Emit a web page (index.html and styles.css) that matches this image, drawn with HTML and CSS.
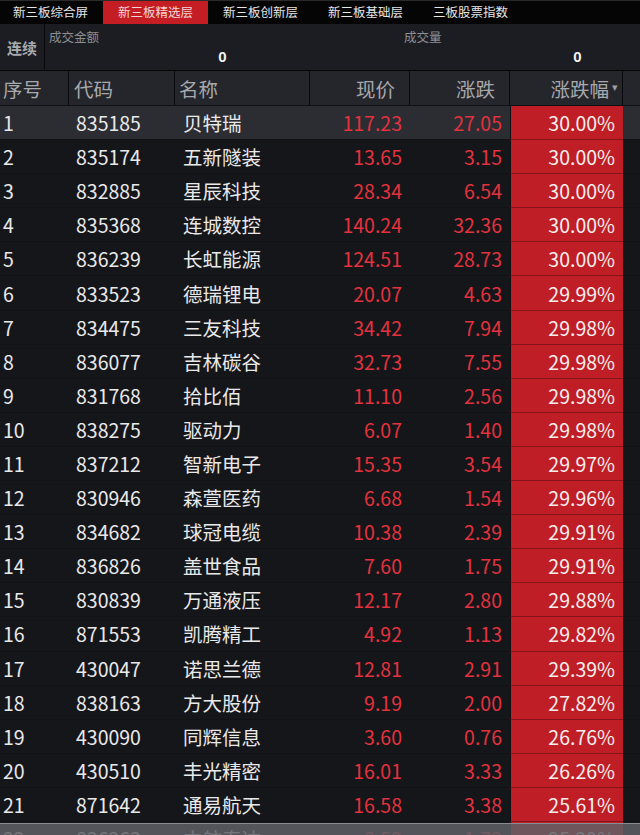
FILE: index.html
```html
<!DOCTYPE html>
<html lang="zh-CN">
<head>
<meta charset="utf-8">
<title>新三板精选层</title>
<link rel="stylesheet" href="styles.css">
</head>
<body>
<div class="screen">
  <nav class="tabs">
    <div class="tab">新三板综合屏</div>
    <div class="tab active">新三板精选层</div>
    <div class="tab">新三板创新层</div>
    <div class="tab">新三板基础层</div>
    <div class="tab">三板股票指数</div>
  </nav>
  <section class="summary">
    <div class="mode">连续</div>
    <div class="stat">
      <div class="stat-label">成交金额</div>
      <div class="stat-value">0</div>
    </div>
    <div class="stat">
      <div class="stat-label">成交量</div>
      <div class="stat-value">0</div>
    </div>
  </section>
  <div class="grid head">
    <div class="c idx">序号</div>
    <div class="c code">代码</div>
    <div class="c name">名称</div>
    <div class="c num">现价</div>
    <div class="c num">涨跌</div>
    <div class="c num pcth">涨跌幅<span class="sort">▾</span></div>
    <div class="c tail"></div>
  </div>
  <div class="body" id="body"></div>
  <div class="scrollbar"></div>
</div>
<script>
const rows = [
["835185","贝特瑞","117.23","27.05","30.00%"],
["835174","五新隧装","13.65","3.15","30.00%"],
["832885","星辰科技","28.34","6.54","30.00%"],
["835368","连城数控","140.24","32.36","30.00%"],
["836239","长虹能源","124.51","28.73","30.00%"],
["833523","德瑞锂电","20.07","4.63","29.99%"],
["834475","三友科技","34.42","7.94","29.98%"],
["836077","吉林碳谷","32.73","7.55","29.98%"],
["831768","拾比佰","11.10","2.56","29.98%"],
["838275","驱动力","6.07","1.40","29.98%"],
["837212","智新电子","15.35","3.54","29.97%"],
["830946","森萱医药","6.68","1.54","29.96%"],
["834682","球冠电缆","10.38","2.39","29.91%"],
["836826","盖世食品","7.60","1.75","29.91%"],
["830839","万通液压","12.17","2.80","29.88%"],
["871553","凯腾精工","4.92","1.13","29.82%"],
["430047","诺思兰德","12.81","2.91","29.39%"],
["838163","方大股份","9.19","2.00","27.82%"],
["430090","同辉信息","3.60","0.76","26.76%"],
["430510","丰光精密","16.01","3.33","26.26%"],
["871642","通易航天","16.58","3.38","25.61%"],
["836263","中航泰达","8.52","1.72","25.29%"]
];
const body = document.getElementById('body');
rows.forEach((r, i) => {
  const row = document.createElement('div');
  row.className = 'grid row' + (i === 0 ? ' sel' : '');
  row.innerHTML =
    '<div class="c idx">' + (i + 1) + '</div>' +
    '<div class="c code">' + r[0] + '</div>' +
    '<div class="c name">' + r[1] + '</div>' +
    '<div class="c num up">' + r[2] + '</div>' +
    '<div class="c num up">' + r[3] + '</div>' +
    '<div class="c num pct">' + r[4] + '</div>' +
    '<div class="c tail"></div>';
  body.appendChild(row);
});
</script>
</body>
</html>
```
FILE: styles.css
```css
* { box-sizing: border-box; }
html, body {
  margin: 0;
  padding: 0;
  background: #15161a;
  font-family: "Noto Sans CJK SC", "Noto Sans", sans-serif;
  overflow: hidden;
}
.screen {
  position: relative;
  width: 640px;
  height: 835px;
  overflow: hidden;
  display: flex;
  flex-direction: column;
}
.tabs {
  flex: none;
  display: flex;
  height: 24px;
  background: #050506;
  border-top: 1px solid #2a2a2c;
  margin-left: -2px;
}
.tab {
  width: 105px;
  flex: none;
  display: flex;
  align-items: center;
  justify-content: center;
  color: #e6e6e6;
  font-size: 12.5px;
  line-height: 1;
}
.tab.active {
  background: #c41d24;
  color: #f3d6d6;
}
.summary {
  flex: none;
  display: flex;
  height: 47px;
  background: #1c1d22;
  border-bottom: 1px solid #060607;
  overflow: hidden;
}
.mode {
  width: 45px;
  flex: none;
  border-right: 1px solid #08080a;
  display: flex;
  align-items: center;
  justify-content: center;
  font-size: 15px;
  font-weight: 700;
  color: #a9aaad;
  padding-top: 1px;
}
.stat {
  width: 355px;
  flex: none;
  display: flex;
  flex-direction: column;
  padding-top: 4px;
}
.stat-label {
  font-size: 12.5px;
  color: #8e8f93;
  padding-left: 4px;
  line-height: 17px;
}
.stat-value {
  text-align: center;
  color: #f2f2f2;
  font-weight: 700;
  font-size: 15px;
  line-height: 20px;
  margin-top: 2px;
  font-family: "Liberation Sans", "Noto Sans", sans-serif;
}
.grid {
  display: grid;
  grid-template-columns: 69px 106px 135px 100px 100px 113px 17px;
}
.head {
  flex: none;
  height: 35px;
  background: #25262b;
  border-bottom: 1px solid #101114;
}
.head .c {
  display: flex;
  align-items: center;
  font-size: 19.5px;
  color: #a8a9ad;
  border-right: 1px solid #0a0a0c;
}
.head .idx { padding-left: 3px; }
.head .code { padding-left: 5px; }
.head .name { padding-left: 4px; }
.head .num { justify-content: flex-end; padding-right: 14px; }
.head .pcth { padding-right: 4px; }
.head .tail { border-right: none; }
.sort {
  font-size: 11px;
  color: #9d9ea2;
  margin-left: 3px;
  margin-top: -4px;
}
.body {
  flex: none;
  display: flex;
  flex-direction: column;
}
.row {
  height: 34.1px;
  flex: none;
}
.row .c {
  display: flex;
  align-items: center;
  font-size: 19.5px;
  color: #e9e9ea;
  border-bottom: 1px solid #111215;
  white-space: nowrap;
}
.row.sel { background: #2c2d32; }
.row .idx { padding-left: 3px; }
.row .code { padding-left: 7px; }
.row .name { padding-left: 8px; font-size: 19.5px; }
.row .num { justify-content: flex-end; padding-right: 8px; }
.row .up { color: #e3323e; }
.row .pct {
  background: #bf1e26;
  color: #f6eeee;
  padding-right: 8px;
  border-left: 1px solid #0e0f12;
  border-bottom: 1px solid #86131a;
}
.scrollbar {
  position: absolute;
  left: 0;
  right: 0;
  top: 823px;
  height: 12px;
  background: rgba(95, 96, 102, 0.85);
  border-top: 1px solid #8a8b90;
}
```
